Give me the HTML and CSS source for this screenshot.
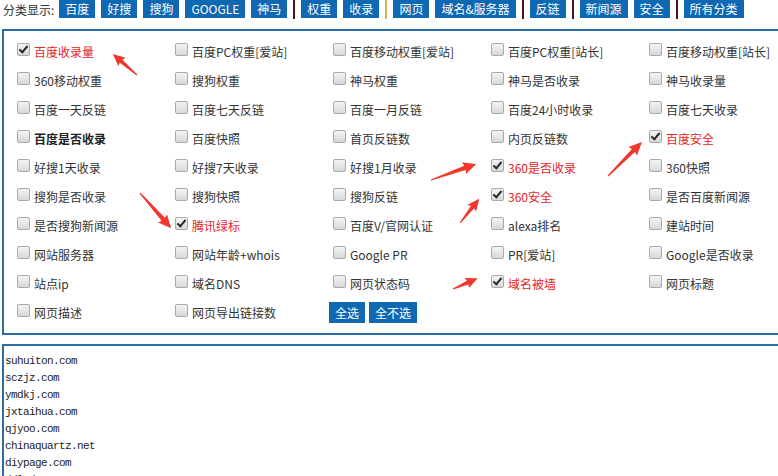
FILE: index.html
```html
<!DOCTYPE html>
<html lang="zh-CN">
<head>
    <meta charset="UTF-8">
    <title>分类显示</title>
    <link rel="stylesheet" href="styles.css">
</head>
<body>
    <div class="topbar">
        <span class="topbar-label">分类显示:</span>
        <a class="cat-btn">百度</a>
        <a class="cat-btn">好搜</a>
        <a class="cat-btn">搜狗</a>
        <a class="cat-btn">GOOGLE</a>
        <a class="cat-btn">神马</a>
        <span class="sep"></span>
        <a class="cat-btn">权重</a>
        <a class="cat-btn">收录</a>
        <span class="sep sep-gold"></span>
        <a class="cat-btn">网页</a>
        <a class="cat-btn">域名&amp;服务器</a>
        <span class="sep"></span>
        <a class="cat-btn">反链</a>
        <span class="sep"></span>
        <a class="cat-btn">新闻源</a>
        <a class="cat-btn">安全</a>
        <span class="sep"></span>
        <a class="cat-btn">所有分类</a>
    </div>

    <div class="panel">
        <div class="grid">
            <label class="item red"><input type="checkbox" checked>百度收录量</label>
            <label class="item"><input type="checkbox">百度PC权重[爱站]</label>
            <label class="item"><input type="checkbox">百度移动权重[爱站]</label>
            <label class="item"><input type="checkbox">百度PC权重[站长]</label>
            <label class="item"><input type="checkbox">百度移动权重[站长]</label>

            <label class="item"><input type="checkbox">360移动权重</label>
            <label class="item"><input type="checkbox">搜狗权重</label>
            <label class="item"><input type="checkbox">神马权重</label>
            <label class="item"><input type="checkbox">神马是否收录</label>
            <label class="item"><input type="checkbox">神马收录量</label>

            <label class="item"><input type="checkbox">百度一天反链</label>
            <label class="item"><input type="checkbox">百度七天反链</label>
            <label class="item"><input type="checkbox">百度一月反链</label>
            <label class="item"><input type="checkbox">百度24小时收录</label>
            <label class="item"><input type="checkbox">百度七天收录</label>

            <label class="item bold"><input type="checkbox">百度是否收录</label>
            <label class="item"><input type="checkbox">百度快照</label>
            <label class="item"><input type="checkbox">首页反链数</label>
            <label class="item"><input type="checkbox">内页反链数</label>
            <label class="item red"><input type="checkbox" checked>百度安全</label>

            <label class="item"><input type="checkbox">好搜1天收录</label>
            <label class="item"><input type="checkbox">好搜7天收录</label>
            <label class="item"><input type="checkbox">好搜1月收录</label>
            <label class="item red"><input type="checkbox" checked>360是否收录</label>
            <label class="item"><input type="checkbox">360快照</label>

            <label class="item"><input type="checkbox">搜狗是否收录</label>
            <label class="item"><input type="checkbox">搜狗快照</label>
            <label class="item"><input type="checkbox">搜狗反链</label>
            <label class="item red"><input type="checkbox" checked>360安全</label>
            <label class="item"><input type="checkbox">是否百度新闻源</label>

            <label class="item"><input type="checkbox">是否搜狗新闻源</label>
            <label class="item red"><input type="checkbox" checked>腾讯绿标</label>
            <label class="item"><input type="checkbox">百度V/官网认证</label>
            <label class="item"><input type="checkbox">alexa排名</label>
            <label class="item"><input type="checkbox">建站时间</label>

            <label class="item"><input type="checkbox">网站服务器</label>
            <label class="item"><input type="checkbox">网站年龄+whois</label>
            <label class="item"><input type="checkbox">Google PR</label>
            <label class="item"><input type="checkbox">PR[爱站]</label>
            <label class="item"><input type="checkbox">Google是否收录</label>

            <label class="item"><input type="checkbox">站点ip</label>
            <label class="item"><input type="checkbox">域名DNS</label>
            <label class="item"><input type="checkbox">网页状态码</label>
            <label class="item red"><input type="checkbox" checked>域名被墙</label>
            <label class="item"><input type="checkbox">网页标题</label>

            <label class="item"><input type="checkbox">网页描述</label>
            <label class="item"><input type="checkbox">网页导出链接数</label>
            <div class="actions">
                <button class="act-btn">全选</button>
                <button class="act-btn">全不选</button>
            </div>
        </div>
    </div>

    <textarea class="domains" spellcheck="false">suhuiton.com
sczjz.com
ymdkj.com
jxtaihua.com
qjyoo.com
chinaquartz.net
diypage.com
ddlsd.com</textarea>

    <!-- red annotation arrows drawn over the page -->
    <svg class="arrows" width="778" height="476" viewBox="0 0 778 476">
        <g fill="#f0392e">
            <polygon transform="translate(137 75) rotate(221)" points="0,-0.6 21,-2 20,-5.5 32,0 20,5.5 21,2 0,0.6"/>
            <polygon transform="translate(140 193) rotate(48.5)" points="0,-0.6 35,-2.2 34,-6 47,0 34,6 35,2.2 0,0.6"/>
            <polygon transform="translate(431 180) rotate(-19.6)" points="0,-0.6 36,-2.2 35,-6 48,0 35,6 36,2.2 0,0.6"/>
            <polygon transform="translate(460 223) rotate(-51.6)" points="0,-0.6 20,-2 19,-5.5 31,0 19,5.5 20,2 0,0.6"/>
            <polygon transform="translate(608 176) rotate(-45)" points="0,-0.6 36,-2.2 35,-6 48,0 35,6 36,2.2 0,0.6"/>
            <polygon transform="translate(453 289) rotate(-23.7)" points="0,-0.6 16,-2 15,-5.5 27,0 15,5.5 16,2 0,0.6"/>
        </g>
    </svg>
</body>
</html>
```

FILE: styles.css
```css
html, body {
    overflow: hidden;
}

body {
    margin: 0;
    position: relative;
    width: 778px;
    height: 476px;
    font-family: "Noto Sans CJK SC", "Noto Sans", sans-serif;
    font-size: 12px;
    color: #333;
    background: #fff;
}

.topbar {
    display: flex;
    align-items: center;
    gap: 6px;
    height: 18px;
    padding-left: 3px;
}

.topbar-label {
    margin-right: -1px;
    color: #333;
}

.cat-btn {
    display: block;
    height: 18px;
    line-height: 18px;
    padding: 0 6px;
    background-color: #0f68b2;
    color: #fff;
    white-space: nowrap;
    cursor: pointer;
}

.sep {
    width: 2px;
    height: 20px;
    background-color: #4a1424;
}

.sep-gold {
    background-color: #d9b35a;
}

.panel {
    margin: 11px 0 0 2px;
    width: 820px;
    border: 2px solid #2c6ca3;
    padding: 6px 0 6px 9px;
}

.grid {
    display: grid;
    grid-template-columns: repeat(5, 158px);
    grid-auto-rows: 29px;
}

.item {
    display: flex;
    align-items: center;
    white-space: nowrap;
    cursor: pointer;
}

.item.red {
    color: #e52525;
}

.item.bold {
    font-weight: bold;
    color: #222;
}

.item input {
    appearance: none;
    -webkit-appearance: none;
    position: relative;
    width: 13px;
    height: 13px;
    margin: 0 4px 4px 4px;
    border: 1px solid #a9a9a9;
    border-radius: 2px;
    background: linear-gradient(#f4f4f4, #d8d8d8);
    box-sizing: border-box;
}

.item input:checked::after {
    content: "";
    position: absolute;
    left: 3px;
    top: 0px;
    width: 3px;
    height: 7px;
    border: solid #2a2a2a;
    border-width: 0 2px 2px 0;
    transform: rotate(40deg);
}

.actions {
    display: flex;
    align-items: center;
    gap: 4px;
}

.act-btn {
    height: 21px;
    padding: 0 6px;
    border: none;
    background-color: #0f68b2;
    color: #fff;
    font-family: "Noto Sans CJK SC", "Noto Sans", sans-serif;
    font-size: 12px;
    cursor: pointer;
}

.domains {
    display: block;
    margin: 9px 0 0 2px;
    width: 820px;
    height: 200px;
    padding: 7px 1px 5px;
    border: 2px solid #2c6ca3;
    font-family: "Liberation Mono", monospace;
    font-size: 11px;
    letter-spacing: -0.6px;
    line-height: 17px;
    color: #222;
    resize: none;
    overflow: hidden;
    outline: none;
}

.arrows {
    position: absolute;
    left: 0;
    top: 0;
    pointer-events: none;
}
```
